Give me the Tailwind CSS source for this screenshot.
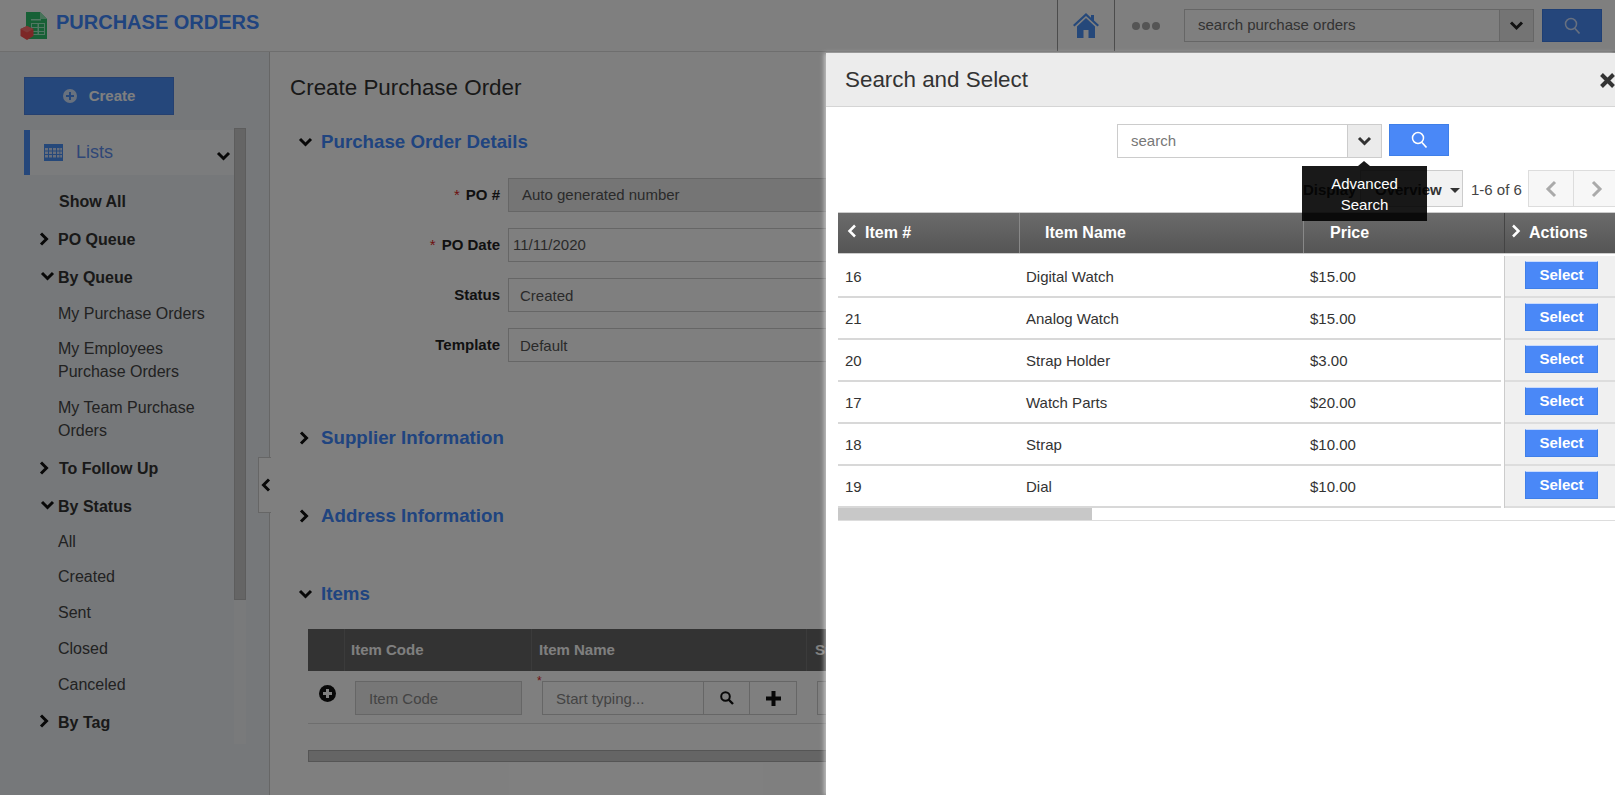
<!DOCTYPE html>
<html>
<head>
<meta charset="utf-8">
<script src="https://cdn.jsdelivr.net/npm/@tailwindcss/browser@4"></script>
<title>Purchase Orders</title>
</head>
<body class="font-['Liberation_Sans',Arial,sans-serif] text-[15px] text-[#333]">
<div class="relative w-[1615px] h-[795px] overflow-hidden bg-white">

  <!-- Top bar -->
  <header class="flex items-center h-[52px] border-b border-[#ddd] bg-white">
    <svg class="ml-[20px] w-[28px] h-[29px]" viewBox="0 0 28 29">
      <path d="M6 1h14l7 7v20H6z" fill="#2fc06d"/>
      <path d="M20 1l7 7h-7z" fill="#8fe6b3"/>
      <path d="M11 8h10v1.5H11zM11 12h14v12H11z" fill="#a5eec6"/>
      <path d="M12 13h5.500v3H12zM19 13h5v3h-5zM12 17h5.500v3H12zM19 17h5v3h-5zM12 21h5.500v2H12zM19 21h5v2h-5z" fill="#2fc06d"/>
      <path d="M7 15l6.500 3v7L7 29 0.500 25v-7z" fill="#fa4f4f"/>
      <path d="M7 21.500l6.500-3.500-6.500-3-6.500 3z" fill="#ff7373"/>
    </svg>
    <div class="ml-[8px] text-[20px] font-bold text-[#4088ff] leading-none mt-[-8px]">PURCHASE ORDERS</div>
    <div class="ml-auto flex items-center h-full">
      <div class="flex items-center justify-center w-[58px] h-full border-x border-[#999]">
        <svg class="w-[28px] h-[26px] mt-[-1px]" viewBox="0 0 28 26">
          <path d="M14 1L1 13l1.500 1.500L14 4l11.500 10.500L27 13l-5-4.600V3h-3v2.700z" fill="#4a90f5"/>
          <path d="M5 14.500L14 6l9 8.500V26h-6.500v-8h-5v8H5z" fill="#4a90f5"/>
        </svg>
      </div>
      <div class="flex gap-[2px] ml-[17px] w-[52px]">
        <span class="w-[8px] h-[8px] rounded-full bg-[#aaa]"></span>
        <span class="w-[8px] h-[8px] rounded-full bg-[#aaa]"></span>
        <span class="w-[8px] h-[8px] rounded-full bg-[#aaa]"></span>
      </div>
      <div class="flex h-[33px] w-[350px] border border-[#ccc]">
        <div class="flex-1 pl-[13px] leading-[30px] text-[#666]">search purchase orders</div>
        <div class="flex items-center justify-center w-[34px] bg-[#e8e8e8] border-l border-[#ccc]">
          <svg class="w-[15px] h-[11px]" viewBox="0 0 15 11"><path d="M2 2.500l5.500 5.500 5.500-5.500" fill="none" stroke="#222" stroke-width="3"/></svg>
        </div>
      </div>
      <div class="flex items-center justify-center ml-[8px] mr-[13px] w-[60px] h-[33px] bg-[#4a8cf7] border border-[#3f7fe8]">
        <svg class="w-[17px] h-[18px]" viewBox="0 0 17 18"><circle cx="7" cy="7" r="5.500" fill="none" stroke="#cfe0ff" stroke-width="1.500"/><path d="M11 11.500l4.500 5" stroke="#cfe0ff" stroke-width="1.700"/></svg>
      </div>
    </div>
  </header>

  <div class="flex h-[743px]">
    <!-- Sidebar -->
    <aside class="relative w-[270px] shrink-0 bg-[#ecf0f4] border-r border-[#ccc]">
      <div class="ml-[24px] mt-[25px] flex items-center justify-center gap-[12px] w-[150px] h-[38px] bg-[#4a8ff7] border border-[#4a80e0] text-white font-bold">
        <svg class="w-[14px] h-[14px]" viewBox="0 0 14 14"><circle cx="7" cy="7" r="7" fill="#fff" fill-opacity=".75"/><path d="M6 3h2v3h3v2H8v3H6V8H3V6h3z" fill="#4a8ff7"/></svg>
        <span>Create</span>
      </div>
      <div class="mt-[15px] ml-[24px] w-[210px] h-[45px] flex items-center border-l-[6px] border-[#4a8ff7] bg-[#f7f8fa]">
        <svg class="ml-[14px] w-[19px] h-[17px]" viewBox="0 0 19 17">
          <rect width="19" height="17" fill="#4a90f5"/>
          <path d="M1 4h3v2.500H1zM5 4h3v2.500H5zM9 4h3v2.500H9zM13 4h2.500v2.500H13zM16.200 4H18v2.500h-1.800zM1 7.500h3V10H1zM5 7.500h3V10H5zM9 7.500h3V10H9zM13 7.500h2.500V10H13zM16.200 7.500H18V10h-1.800zM1 11h3v2.500H1zM5 11h3v2.500H5zM9 11h3v2.500H9zM13 11h2.500v2.500H13zM16.200 11H18v2.500h-1.800z" fill="#cfdcf6"/>
        </svg>
        <span class="ml-[13px] text-[18px] text-[#5f8fee]">Lists</span>
        <svg class="ml-auto mr-[3px] mt-[7px] w-[15px] h-[11px]" viewBox="0 0 15 11"><path d="M2 2l5.500 5.500L13 2" fill="none" stroke="#111" stroke-width="3"/></svg>
      </div>
      <nav class="mt-[7px] text-[16px] leading-[23.500px]">
        <div class="h-[38px] pt-[2px] flex items-center pl-[59px] font-bold">Show All</div>
        <div class="h-[38px] pt-[2px] flex items-center pl-[58px] font-bold relative">
          <svg class="absolute left-[39px] top-[12px] w-[11px] h-[14px]" viewBox="0 0 11 14"><path d="M2 1.500L7.500 7 2 12.500" fill="none" stroke="#111" stroke-width="3"/></svg>PO Queue</div>
        <div class="h-[38px] pt-[2px] flex items-center pl-[58px] font-bold relative">
          <svg class="absolute left-[40px] top-[13px] w-[15px] h-[11px]" viewBox="0 0 15 11"><path d="M2 2l5.500 5.500L13 2" fill="none" stroke="#111" stroke-width="3"/></svg>By Queue</div>
        <div class="h-[35px] flex items-center pl-[58px] text-[#444]">My Purchase Orders</div>
        <div class="h-[58px] flex items-center pl-[58px] pr-[50px] text-[#444]">My Employees Purchase Orders</div>
        <div class="h-[60px] flex items-center pl-[58px] pr-[50px] text-[#444]">My Team Purchase Orders</div>
        <div class="h-[38px] pt-[2px] flex items-center pl-[59px] font-bold relative">
          <svg class="absolute left-[39px] top-[12px] w-[11px] h-[14px]" viewBox="0 0 11 14"><path d="M2 1.500L7.500 7 2 12.500" fill="none" stroke="#111" stroke-width="3"/></svg>To Follow Up</div>
        <div class="h-[38px] pt-[2px] flex items-center pl-[58px] font-bold relative">
          <svg class="absolute left-[40px] top-[13px] w-[15px] h-[11px]" viewBox="0 0 15 11"><path d="M2 2l5.500 5.500L13 2" fill="none" stroke="#111" stroke-width="3"/></svg>By Status</div>
        <div class="h-[34px] flex items-center pl-[58px] text-[#444]">All</div>
        <div class="h-[36px] flex items-center pl-[58px] text-[#444]">Created</div>
        <div class="h-[35px] flex items-center pl-[58px] text-[#444]">Sent</div>
        <div class="h-[37px] flex items-center pl-[58px] text-[#444]">Closed</div>
        <div class="h-[35px] flex items-center pl-[58px] text-[#444]">Canceled</div>
        <div class="h-[39px] pt-[2px] flex items-center pl-[58px] font-bold relative">
          <svg class="absolute left-[39px] top-[12px] w-[11px] h-[14px]" viewBox="0 0 11 14"><path d="M2 1.500L7.500 7 2 12.500" fill="none" stroke="#111" stroke-width="3"/></svg>By Tag</div>
      </nav>
      <!-- sidebar scrollbar -->
      <div class="absolute left-[234px] top-[76px] w-[12px] h-[616px] bg-[#f3f4f6]">
        <div class="w-full h-[472px] bg-[#cbcbcb] border border-[#bbb]"></div>
      </div>
      <!-- collapse handle -->
      <div class="absolute left-[258px] top-[405px] w-[13px] h-[56px] flex items-center justify-end bg-white border border-[#ccc] border-r-0">
        <svg class="w-[10px] h-[14px]" viewBox="0 0 10 14"><path d="M8 1.500L2.500 7 8 12.500" fill="none" stroke="#111" stroke-width="3"/></svg>
      </div>
    </aside>

    <!-- Main form -->
    <main class="flex-1 min-w-0 overflow-hidden pl-[20px]">
      <h1 class="mt-[23px] text-[22.400px] leading-[26px] text-[#333]">Create Purchase Order</h1>

      <div class="mt-[28px] flex items-center h-[26px] ml-[8px]">
        <svg class="w-[15px] h-[11px]" viewBox="0 0 15 11"><path d="M2 2l5.500 5.500L13 2" fill="none" stroke="#111" stroke-width="3"/></svg>
        <h2 class="ml-[8px] text-[18.720px] font-bold text-[#4088ff]">Purchase Order Details</h2>
      </div>

      <div class="mt-[23px] w-[700px] flex flex-col gap-[16px]">
        <div class="flex items-center h-[34px]">
          <label class="w-[210px] text-right font-bold text-[#222]"><span class="text-[#d22] font-normal mr-[6px]">*</span>PO #</label>
          <div class="ml-[8px] flex-1 h-full pl-[13px] leading-[32px] bg-[#eaeaea] border border-[#ccc] text-[#555]">Auto generated number</div>
        </div>
        <div class="flex items-center h-[34px]">
          <label class="w-[210px] text-right font-bold text-[#222]"><span class="text-[#d22] font-normal mr-[6px]">*</span>PO Date</label>
          <div class="ml-[8px] flex-1 h-full pl-[4px] leading-[32px] border border-[#ccc] text-[#555]">11/11/2020</div>
        </div>
        <div class="flex items-center h-[34px]">
          <label class="w-[210px] pt-[1px] text-right font-bold text-[#222]">Status</label>
          <div class="ml-[8px] flex-1 h-full pl-[11px] leading-[34px] border border-[#ccc] text-[#555]">Created</div>
        </div>
        <div class="flex items-center h-[34px]">
          <label class="w-[210px] pt-[1px] text-right font-bold text-[#222]">Template</label>
          <div class="ml-[8px] flex-1 h-full pl-[11px] leading-[34px] border border-[#ccc] text-[#555]">Default</div>
        </div>
      </div>

      <div class="mt-[63px] flex items-center h-[26px] ml-[9px]">
        <svg class="w-[11px] h-[14px]" viewBox="0 0 11 14"><path d="M2 1.500L7.500 7 2 12.500" fill="none" stroke="#111" stroke-width="3"/></svg>
        <h2 class="ml-[11px] text-[18.720px] font-bold text-[#4088ff]">Supplier Information</h2>
      </div>
      <div class="mt-[52px] flex items-center h-[26px] ml-[9px]">
        <svg class="w-[11px] h-[14px]" viewBox="0 0 11 14"><path d="M2 1.500L7.500 7 2 12.500" fill="none" stroke="#111" stroke-width="3"/></svg>
        <h2 class="ml-[11px] text-[18.720px] font-bold text-[#4088ff]">Address Information</h2>
      </div>
      <div class="mt-[52px] flex items-center h-[26px] ml-[8px]">
        <svg class="w-[15px] h-[11px]" viewBox="0 0 15 11"><path d="M2 2l5.500 5.500L13 2" fill="none" stroke="#111" stroke-width="3"/></svg>
        <h2 class="ml-[8px] text-[18.720px] font-bold text-[#4088ff]">Items</h2>
      </div>

      <!-- Items table -->
      <div class="mt-[22px] ml-[18px] w-[600px]">
        <div class="flex h-[42px] bg-[#666] font-bold text-white leading-[42px]">
          <div class="w-[37px] border-r border-[#777]"></div>
          <div class="w-[187px] pl-[6px] border-r border-[#777]">Item Code</div>
          <div class="w-[275px] pl-[7px] border-r border-[#777]">Item Name</div>
          <div class="pl-[8px]">Supplier</div>
        </div>
        <div class="relative flex h-[53px] border-b border-[#ddd]">
          <svg class="absolute left-[11px] top-[14px] w-[17px] h-[17px]" viewBox="0 0 17 17"><circle cx="8.500" cy="8.500" r="8.500" fill="#111"/><path d="M7 4h3v3h3v3h-3v3H7v-3H4V7h3z" fill="#fff"/></svg>
          <div class="ml-[47px] mt-[10px] w-[167px] h-[34px] pl-[13px] leading-[34px] bg-[#eee] border border-[#ccc] text-[#888]">Item Code</div>
          <span class="absolute left-[229px] top-[3px] text-[12px] leading-[14px] text-[#d22]">*</span>
          <div class="ml-[20px] mt-[10px] flex w-[255px] h-[34px] border border-[#ccc] text-[#888]">
            <div class="w-[160px] pl-[13px] leading-[34px]">Start typing...</div>
            <div class="w-[46px] flex items-center justify-center border-l border-[#ccc]">
              <svg class="w-[14px] h-[14px]" viewBox="0 0 14 14"><circle cx="5.500" cy="5.500" r="4.300" fill="none" stroke="#111" stroke-width="2"/><path d="M8.500 8.500l4.500 4.500" stroke="#111" stroke-width="2.400"/></svg>
            </div>
            <div class="flex-1 flex items-center justify-center border-l border-[#ccc]">
              <svg class="w-[15px] h-[15px]" viewBox="0 0 15 15"><path d="M5.500 0h4v5.500H15v4H9.500V15h-4V9.500H0v-4h5.500z" fill="#111"/></svg>
            </div>
          </div>
          <div class="ml-[20px] mt-[10px] w-[60px] h-[34px] border border-[#ccc]"></div>
        </div>
        <div class="mt-[26px] h-[12px] bg-[#cbcbcb] border border-[#aaa]"></div>
      </div>
    </main>
  </div>

  <!-- Dim layer -->
  <div class="absolute inset-0 bg-black/50"></div>

  <!-- Search and Select panel -->
  <section class="absolute left-[826px] top-[53px] right-0 bottom-0 overflow-hidden bg-white shadow-[-2px_0_4px_rgba(255,255,255,0.5)]">
    <div class="flex items-center justify-between h-[54px] pl-[19px] bg-[#ececec] border-b border-[#d5d5d5]">
      <h3 class="text-[22.400px] text-[#333]">Search and Select</h3>
      <svg class="w-[15px] h-[15px] mt-[2px]" viewBox="0 0 15 15"><path d="M1.500 1.500l12 12M13.500 1.500l-12 12" stroke="#333" stroke-width="4"/></svg>
    </div>

    <div class="flex items-start pt-[17px] pl-[291px]">
      <div class="flex w-[265px] h-[34px] border border-[#ccc]">
        <div class="flex-1 pl-[13px] leading-[32px] text-[#777]">search</div>
        <div class="flex items-center justify-center w-[34px] bg-[#ebebeb] border-l border-[#ccc]">
          <svg class="w-[15px] h-[11px]" viewBox="0 0 15 11"><path d="M2 2l5.500 5.500L13 2" fill="none" stroke="#333" stroke-width="3"/></svg>
        </div>
      </div>
      <div class="flex items-center justify-center ml-[7px] w-[60px] h-[32px] bg-[#4a88f7] border border-[#3f7fe8]">
        <svg class="w-[17px] h-[18px]" viewBox="0 0 17 18"><circle cx="7" cy="7" r="5.500" fill="none" stroke="#fff" stroke-width="1.500"/><path d="M11 11.500l4.500 5" stroke="#fff" stroke-width="1.700"/></svg>
      </div>
    </div>

    <div class="flex items-center mt-[12px] pl-[477px] h-[37px] whitespace-nowrap">
      <span class="shrink-0 w-[57px] pt-[3px] font-bold text-[#333]">Display</span>
      <div class="shrink-0 flex items-center w-[103px] h-full pl-[14px] pt-[3px] bg-[#f2f2f2] border border-[#ccc] font-bold text-[#333]">
        Overview
        <span class="ml-[8px] border-x-[5px] border-x-transparent border-t-[5px] border-t-[#333]"></span>
      </div>
      <span class="shrink-0 ml-[8px] w-[57px] pt-[4px] text-[#444]">1-6 of 6</span>
      <div class="shrink-0 flex items-center justify-center w-[46px] h-full bg-[#f7f7f7] border border-[#ddd]">
        <svg class="w-[13px] h-[18px]" viewBox="0 0 13 18"><path d="M10 2L3 9l7 7" fill="none" stroke="#aaa" stroke-width="3"/></svg>
      </div>
      <div class="shrink-0 flex items-center justify-center w-[46px] h-full bg-[#f7f7f7] border border-l-0 border-[#ddd]">
        <svg class="w-[13px] h-[18px]" viewBox="0 0 13 18"><path d="M3 2l7 7-7 7" fill="none" stroke="#aaa" stroke-width="3"/></svg>
      </div>
    </div>

    <!-- Result table -->
    <div class="mt-[5px] ml-[12px] flex h-[42px] border-y border-[#ccc] bg-gradient-to-b from-[#6b6b6b] to-[#555] text-[16px] font-bold text-white leading-[39px]">
      <div class="relative w-[182px] pl-[27px] border-r border-[#888]">
        <svg class="absolute left-[9px] top-[11px] w-[10px] h-[14px]" viewBox="0 0 10 14"><path d="M8 1.500L2.500 7 8 12.500" fill="none" stroke="#fff" stroke-width="2.500"/></svg>Item #</div>
      <div class="w-[284px] pl-[25px] border-r border-[#888]">Item Name</div>
      <div class="w-[201px] pl-[26px] border-r border-[#444]">Price</div>
      <div class="relative flex-1 pl-[24px]">
        <svg class="absolute left-[6px] top-[11px] w-[10px] h-[14px]" viewBox="0 0 10 14"><path d="M2 1.500L7.500 7 2 12.500" fill="none" stroke="#fff" stroke-width="2.500"/></svg>Actions</div>
    </div>

    <div class="ml-[12px] flex mt-[2px] border-b border-[#ddd]">
      <div class="w-[663px] text-[#333]">
        <div class="flex items-center h-[42px] pt-[2px] border-b-2 border-[#d8d8d8]"><span class="w-[188px] pl-[7px]">16</span><span class="w-[284px]">Digital Watch</span><span>$15.00</span></div>
        <div class="flex items-center h-[42px] pt-[2px] border-b-2 border-[#d8d8d8]"><span class="w-[188px] pl-[7px]">21</span><span class="w-[284px]">Analog Watch</span><span>$15.00</span></div>
        <div class="flex items-center h-[42px] pt-[2px] border-b-2 border-[#d8d8d8]"><span class="w-[188px] pl-[7px]">20</span><span class="w-[284px]">Strap Holder</span><span>$3.00</span></div>
        <div class="flex items-center h-[42px] pt-[2px] border-b-2 border-[#d8d8d8]"><span class="w-[188px] pl-[7px]">17</span><span class="w-[284px]">Watch Parts</span><span>$20.00</span></div>
        <div class="flex items-center h-[42px] pt-[2px] border-b-2 border-[#d8d8d8]"><span class="w-[188px] pl-[7px]">18</span><span class="w-[284px]">Strap</span><span>$10.00</span></div>
        <div class="flex items-center h-[42px] pt-[2px] border-b-2 border-[#d8d8d8]"><span class="w-[188px] pl-[7px]">19</span><span class="w-[284px]">Dial</span><span>$10.00</span></div>
        <div class="h-[12px]"><div class="w-[254px] h-full bg-[#c8c8c8]"></div></div>
      </div>
      <div class="ml-[3px] flex-1 self-start border-l border-[#ccc] bg-[#f0f0f0]">
        <div class="flex items-center h-[42px] border-b-2 border-[#ddd] pl-[20px]"><button class="w-[73px] h-[28px] pt-[1px] -mt-[2px] bg-[#4a88f7] border border-[#3f7fe8] border-t-white/70 font-bold text-white">Select</button></div>
        <div class="flex items-center h-[42px] border-b-2 border-[#ddd] pl-[20px]"><button class="w-[73px] h-[28px] pt-[1px] -mt-[2px] bg-[#4a88f7] border border-[#3f7fe8] border-t-white/70 font-bold text-white">Select</button></div>
        <div class="flex items-center h-[42px] border-b-2 border-[#ddd] pl-[20px]"><button class="w-[73px] h-[28px] pt-[1px] -mt-[2px] bg-[#4a88f7] border border-[#3f7fe8] border-t-white/70 font-bold text-white">Select</button></div>
        <div class="flex items-center h-[42px] border-b-2 border-[#ddd] pl-[20px]"><button class="w-[73px] h-[28px] pt-[1px] -mt-[2px] bg-[#4a88f7] border border-[#3f7fe8] border-t-white/70 font-bold text-white">Select</button></div>
        <div class="flex items-center h-[42px] border-b-2 border-[#ddd] pl-[20px]"><button class="w-[73px] h-[28px] pt-[1px] -mt-[2px] bg-[#4a88f7] border border-[#3f7fe8] border-t-white/70 font-bold text-white">Select</button></div>
        <div class="flex items-center h-[42px] border-b-2 border-[#ddd] pl-[20px]"><button class="w-[73px] h-[28px] pt-[1px] -mt-[2px] bg-[#4a88f7] border border-[#3f7fe8] border-t-white/70 font-bold text-white">Select</button></div>
      </div>
    </div>

    <!-- Advanced Search tooltip -->
    <div class="absolute left-[476px] top-[113px] w-[125px] h-[55px] bg-black/90 text-white text-center leading-[21px] pt-[7px] px-[20px]">
      <span class="absolute left-[56px] top-[-5px] border-x-[6px] border-x-transparent border-b-[5px] border-b-black/90"></span>
      Advanced Search
    </div>
  </section>
</div>
</body>
</html>
